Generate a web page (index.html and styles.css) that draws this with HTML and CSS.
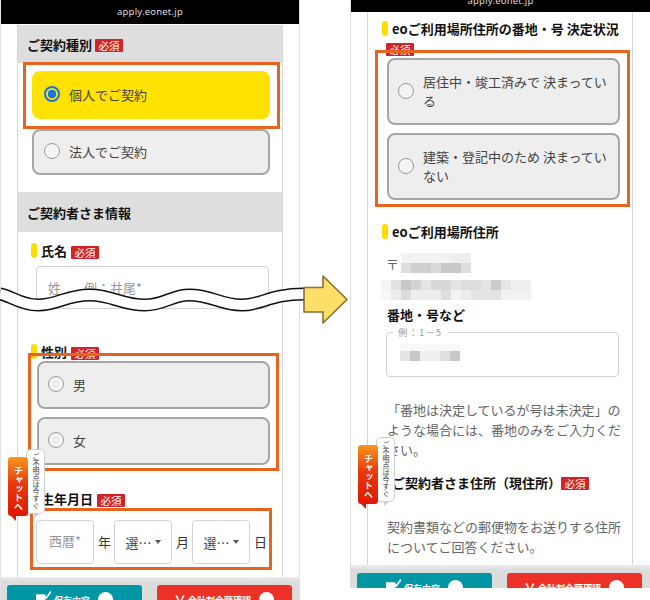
FILE: index.html
```html
<!DOCTYPE html>
<html lang="ja">
<head>
<meta charset="utf-8">
<title>eo お申し込みフォーム</title>
<link rel="stylesheet" href="styles.css">
</head>
<body>
<div class="stage">

  <section class="phone phone-left">
    <div class="topbar">apply.eonet.jp</div>
    <div class="card">
      <div class="sec-head">ご契約種別<span class="badge">必須</span></div>
      <div class="opt opt-on opt-first"><span class="radio radio-on"></span>個人でご契約</div>
      <div class="opt opt-second"><span class="radio"></span>法人でご契約</div>

      <div class="sec-head sec-head-tall">ご契約者さま情報</div>
      <div class="label label-name"><span class="mark"></span>氏名<span class="badge">必須</span></div>
      <div class="input input-name"><span>姓</span><span class="ph-name">例：井尾*</span></div>

      <div class="label label-sex"><span class="mark"></span>性別<span class="badge">必須</span></div>
      <div class="opt opt-sex opt-sex-first"><span class="radio"></span>男</div>
      <div class="opt opt-sex"><span class="radio"></span>女</div>

      <div class="label label-birth"><span class="mark"></span>生年月日<span class="badge">必須</span></div>
      <div class="date-row">
        <div class="date-box date-ph">西暦*</div><span class="date-unit">年</span>
        <div class="date-box">選⋯<i class="caret"></i></div><span class="date-unit">月</span>
        <div class="date-box">選⋯<i class="caret"></i></div><span class="date-unit">日</span>
      </div>
    </div>
    <div class="bottom">
      <div class="btn btn-teal"><svg class="btn-icon" viewBox="0 0 16 16"><rect x="0" y="3" width="10" height="13" fill="#fff"/><path d="M8 4l3 3 5-7" fill="none" stroke="#fff" stroke-width="1.8"/></svg><span class="btn-text">保存内容</span><span class="btn-dot"></span></div>
      <div class="btn btn-red"><span class="btn-yen">¥</span><span class="btn-text">合計割金額確認</span><span class="btn-dot"></span></div>
    </div>

    <div class="frame frame-a"></div>
    <div class="frame frame-b"></div>
    <div class="frame frame-c"></div>

    <div class="chat">
      <div class="chat-bubble">ご不明点は今すぐ</div>
      <div class="chat-tab">チャットへ</div>
    </div>
  </section>

  <section class="phone phone-right">
    <div class="topbar topbar-cut"><span>apply.eonet.jp</span></div>
    <div class="card">
      <div class="label label-r1"><span class="mark"></span>eoご利用場所住所の番地・号 決定状況</div>
      <span class="badge badge-own">必須</span>
      <div class="opt opt-wide opt-wide-first"><span class="radio"></span><span class="opt-text">居住中・竣工済みで 決まっている</span></div>
      <div class="opt opt-wide"><span class="radio"></span><span class="opt-text">建築・登記中のため 決まっていない</span></div>

      <div class="label label-r2"><span class="mark"></span>eoご利用場所住所</div>
      <div class="zip">〒<svg class="mosaic" width="70" height="20" shape-rendering="crispEdges">
        <rect width="50" height="10" fill="#f3f3f3"/><rect x="50" width="20" height="10" fill="#eeeeee"/>
        <rect y="10" width="10" height="10" fill="#dedede"/><rect x="10" y="10" width="20" height="10" fill="#cfcfcf"/><rect x="30" y="10" width="10" height="10" fill="#dadada"/><rect x="40" y="10" width="20" height="10" fill="#c8c8c8"/><rect x="60" y="10" width="10" height="10" fill="#dedede"/>
      </svg></div>
      <svg class="mosaic mosaic-addr" width="150" height="20" shape-rendering="crispEdges">
        <rect width="10" height="10" fill="#f5f5f5"/><rect x="10" width="10" height="10" fill="#e2e2e2"/><rect x="20" width="10" height="10" fill="#c8c8c8"/><rect x="30" width="10" height="10" fill="#d4d4d4"/><rect x="40" width="10" height="10" fill="#e4e4e4"/><rect x="50" width="20" height="10" fill="#d8d8d8"/><rect x="70" width="10" height="10" fill="#e4e4e4"/><rect x="80" width="20" height="10" fill="#dedede"/><rect x="100" width="10" height="10" fill="#e6e6e6"/><rect x="110" width="10" height="10" fill="#cccccc"/><rect x="120" width="10" height="10" fill="#e6e6e6"/><rect x="130" width="20" height="10" fill="#efefef"/>
        <rect y="10" width="10" height="10" fill="#f7f7f7"/><rect x="10" y="10" width="10" height="10" fill="#ececec"/><rect x="20" y="10" width="10" height="10" fill="#dcdcdc"/><rect x="30" y="10" width="30" height="10" fill="#eeeeee"/><rect x="60" y="10" width="10" height="10" fill="#dedede"/><rect x="70" y="10" width="10" height="10" fill="#f2f2f2"/><rect x="80" y="10" width="10" height="10" fill="#ececec"/><rect x="90" y="10" width="30" height="10" fill="#e4e4e4"/><rect x="120" y="10" width="30" height="10" fill="#f2f2f2"/>
      </svg>
      <div class="sub-label">番地・号など</div>
      <div class="input input-addr">
        <span class="legend">例：1－5</span>
        <svg class="mosaic" width="60" height="17" shape-rendering="crispEdges">
          <rect width="60" height="7" fill="#f8f8f8"/>
          <rect y="7" width="10" height="10" fill="#e4e4e4"/><rect x="10" y="7" width="10" height="10" fill="#c6c6c6"/><rect x="20" y="7" width="20" height="10" fill="#efefef"/><rect x="40" y="7" width="10" height="10" fill="#e0e0e0"/><rect x="50" y="7" width="10" height="10" fill="#c8c8c8"/>
        </svg>
      </div>
      <p class="para para-a">「番地は決定しているが号は未決定」のような場合には、番地のみをご入力ください。</p>
      <div class="label label-r3"><span class="mark"></span>ご契約者さま住所（現住所）<span class="badge">必須</span></div>
      <p class="para para-b">契約書類などの郵便物をお送りする住所についてご回答ください。</p>
    </div>
    <div class="bottom">
      <div class="btn btn-teal"><svg class="btn-icon" viewBox="0 0 16 16"><rect x="0" y="3" width="10" height="13" fill="#fff"/><path d="M8 4l3 3 5-7" fill="none" stroke="#fff" stroke-width="1.8"/></svg><span class="btn-text">保存内容</span><span class="btn-dot"></span></div>
      <div class="btn btn-red"><span class="btn-yen">¥</span><span class="btn-text">合計割金額確認</span><span class="btn-dot"></span></div>
    </div>

    <div class="frame frame-d"></div>

    <div class="chat">
      <div class="chat-bubble">ご不明点は今すぐ</div>
      <div class="chat-tab">チャットへ</div>
    </div>
  </section>

  <svg class="wave" viewBox="0 0 304 40" aria-hidden="true">
    <path class="wave-edge" d="M0 15 C12 17 20 26 38 26 C58 26 66 16 90 16 C112 16 122 26 145 26 C164 26 172 16 189 16 C212 16 220 26 242 26 C262 26 270 15 304 15"/>
    <path class="wave-fill" d="M0 15 C12 17 20 26 38 26 C58 26 66 16 90 16 C112 16 122 26 145 26 C164 26 172 16 189 16 C212 16 220 26 242 26 C262 26 270 15 304 15"/>
  </svg>

  <svg class="arrow" viewBox="0 0 46 50" aria-hidden="true">
    <path d="M1 12.5H20V1L44 24.500 20 48V37H1Z" fill="#fbdf66" stroke="#8f6b3e" stroke-width="1.6" stroke-linejoin="round"/>
  </svg>
</div>
</body>
</html>
```

FILE: styles.css
```css
* { box-sizing: border-box; }

html, body {
  margin: 0;
  padding: 0;
  background: #fff;
}

body {
  font-family: "Noto Sans CJK JP", "Noto Sans", sans-serif;
  font-size: 13px;
  color: #333;
}

.stage {
  position: relative;
  display: flex;
  gap: 50px;
  width: 650px;
  height: 600px;
  overflow: hidden;
}

.phone {
  position: relative;
  display: flex;
  flex-direction: column;
  flex: none;
  overflow: hidden;
  border-left: 1px solid #e2e2e2;
  border-right: 1px solid #e2e2e2;
}

.phone-left { width: 300px; height: 600px; }
.phone-right { width: 301px; height: 588px; }

.topbar {
  flex: none;
  height: 24px;
  background: #000;
  color: #ddd;
  font-family: "Noto Sans", sans-serif;
  font-size: 9.5px;
  line-height: 24px;
  letter-spacing: 0.2px;
  text-align: center;
}

.phone-left .topbar { margin-bottom: 1px; }

.topbar-cut {
  height: 12px;
  overflow: hidden;
}

.topbar-cut span {
  display: block;
  margin-top: -11px;
}

.card {
  flex: 1 1 0;
  min-height: 0;
  width: 266px;
  margin-left: 16px;
  overflow: hidden;
  background: #fff;
  border-left: 1px solid #d8d8d8;
  border-right: 1px solid #d8d8d8;
}

.sec-head {
  display: flex;
  align-items: center;
  gap: 3px;
  height: 38px;
  padding-left: 9px;
  background: #dedede;
  color: #111;
  font-weight: 700;
}

.sec-head .badge { margin-top: 2px; }

.sec-head-tall {
  height: 40px;
  margin-top: 17px;
}

.badge {
  display: inline-block;
  flex: none;
  width: 28px;
  height: 13px;
  background: #d2222a;
  border-radius: 1px;
  color: #fff;
  font-size: 10.5px;
  font-weight: 400;
  line-height: 13px;
  text-align: center;
}

.opt {
  display: flex;
  align-items: center;
  gap: 9px;
  background: #eee;
  border: 2px solid #a6a6a6;
  border-radius: 8px;
  padding: 0 0 2px 10px;
  color: #444;
  font-size: 13px;
}

.opt-first {
  height: 48px;
  margin: 8px 12px 0 14px;
}

.opt-second {
  height: 46px;
  margin: 10px 12px 0 14px;
}

.opt-on {
  background: #ffe200;
  border-color: #ffe200;
}

.opt-sex {
  height: 48px;
  margin: 8px 12px 0 19px;
  padding-left: 9px;
}

.opt-sex-first { margin-top: 2px; }

.opt-wide {
  height: 67px;
  width: 233px;
  margin: 8px 0 0 19px;
  padding-left: 9px;
  line-height: 19px;
}

.opt-wide-first { margin-top: 2px; }

.opt-text { width: 186px; }

.radio {
  flex: none;
  width: 16px;
  height: 16px;
  border: 1.5px solid #9c9c9c;
  border-radius: 50%;
  background: #f4f4f4;
}

.radio-on {
  border: 2px solid #1a73e8;
  background: radial-gradient(circle, #1a73e8 0 4px, #ffe200 4.5px);
}

.label {
  display: flex;
  align-items: center;
  gap: 4px;
  height: 16px;
  margin-left: 13px;
  color: #111;
  font-weight: 700;
  white-space: nowrap;
}

.label .badge { margin-top: 4px; }

.mark {
  flex: none;
  width: 6px;
  height: 15px;
  border-radius: 3px;
  background: #ffdc00;
}

.label-name { margin-top: 10px; }
.label-sex { margin-top: 34px; }
.label-birth { margin-top: 25px; }
.label-r1 { margin: 8px 0 0 14px; }
.label-r2 { margin: 23px 0 0 14px; }
.label-r3 { margin: 14px 0 0 14px; }
.label-r3 .badge { margin: 2px 0 0 -4px; }

.badge-own {
  display: block;
  margin: 7px 0 0 18px;
}

.input {
  background: #fff;
  border: 1px solid #d4d4d4;
  border-radius: 4px;
}

.input-name {
  display: flex;
  gap: 23px;
  width: 233px;
  height: 43px;
  margin: 8px 0 0 18px;
  padding: 11px 0 0 11px;
  color: #999;
}

.input-addr {
  position: relative;
  width: 233px;
  height: 45px;
  margin: 9px 0 0 18px;
  padding: 11px 0 0 13px;
}

.legend {
  position: absolute;
  left: 6px;
  top: -8px;
  padding: 0 6px 0 5px;
  background: #fff;
  color: #999;
  font-size: 9.5px;
  line-height: 14px;
  letter-spacing: 1px;
}

.date-row {
  display: flex;
  gap: 4px;
  height: 44px;
  margin: 14px 0 0 18px;
}

.date-box {
  display: flex;
  align-items: center;
  justify-content: center;
  gap: 3px;
  flex: none;
  width: 58px;
  border: 1px solid #d4d4d4;
  border-radius: 4px;
  color: #444;
}

.date-ph { color: #999; padding-bottom: 3px; }

.date-unit {
  flex: none;
  width: 12px;
  font-size: 13px;
  line-height: 44px;
  text-align: center;
  color: #333;
}

.caret {
  width: 0;
  height: 0;
  border-left: 3.5px solid transparent;
  border-right: 3.5px solid transparent;
  border-top: 4px solid #555;
}

.bottom {
  flex: none;
  display: flex;
  gap: 15px;
  height: 23px;
  padding: 8px 0 0 6px;
  background: linear-gradient(#ececec, #dcdcdc 5px);
  overflow: hidden;
}

.btn {
  flex: none;
  display: flex;
  align-items: flex-start;
  justify-content: center;
  gap: 3px;
  width: 135px;
  height: 34px;
  padding-top: 5px;
  border-radius: 3px;
  color: #fff;
  font-size: 9px;
  font-weight: 700;
}

.btn-teal { background: #0096a4; }
.btn-red { background: #ec3226; }

.btn-icon {
  flex: none;
  width: 15px;
  height: 16px;
  margin-top: 1px;
}

.btn-text {
  margin-top: 5px;
  line-height: 12px;
  white-space: nowrap;
}

.btn-yen {
  font-size: 18px;
  font-weight: 400;
  line-height: 20px;
}

.btn-dot {
  flex: none;
  width: 15px;
  height: 15px;
  margin: 2px 0 0 5px;
  border-radius: 50%;
  background: #fff;
}

.frame {
  position: absolute;
  border: 3px solid #e8641e;
  pointer-events: none;
}

.frame-a { left: 22px; top: 62px; width: 257px; height: 67px; }
.frame-b { left: 27px; top: 353px; width: 251px; height: 118px; }
.frame-c { left: 29px; top: 508px; width: 242px; height: 62px; }
.frame-d { left: 24px; top: 50px; width: 255px; height: 157px; }

.chat {
  position: absolute;
  left: 7px;
  width: 38px;
  height: 72px;
}

.phone-left .chat { top: 449px; }
.phone-right .chat { top: 437px; }

.chat-tab {
  position: absolute;
  left: 0;
  top: 8px;
  width: 20px;
  height: 59px;
  padding-top: 9px;
  border-radius: 3px;
  background: linear-gradient(#f8961f, #e83a0a 45%, #df1800);
  color: #fff;
  font-size: 9px;
  font-weight: 700;
  line-height: 20px;
  writing-mode: vertical-rl;
  white-space: nowrap;
}

.chat-tab::after {
  content: "";
  position: absolute;
  left: 3px;
  top: 59px;
  border-top: 5px solid #df1800;
  border-left: 5px solid transparent;
}

.chat-bubble {
  position: absolute;
  left: 18px;
  top: 0;
  width: 19px;
  height: 65px;
  padding-top: 3px;
  background: #fff;
  border: 1px solid #cfcfcf;
  border-radius: 5px;
  color: #333;
  font-size: 7px;
  line-height: 17px;
  writing-mode: vertical-rl;
  white-space: nowrap;
}

.chat-bubble::after {
  content: "";
  position: absolute;
  left: 7px;
  top: 63px;
  border-top: 5px solid #cfcfcf;
  border-right: 6px solid transparent;
}

.zip {
  display: flex;
  align-items: center;
  gap: 2px;
  height: 20px;
  margin: 14px 0 0 18px;
  color: #666;
}

.mosaic { display: block; flex: none; }

.mosaic-addr { margin: 7px 0 0 13px; }

.sub-label {
  height: 16px;
  margin: 7px 0 0 19px;
  color: #111;
  font-weight: 700;
  line-height: 16px;
}

.para {
  width: 234px;
  margin: 0 0 0 19px;
  color: #666;
  font-size: 13px;
  line-height: 20px;
}

.para-a { margin-top: 23px; }
.para-b { margin-top: 27px; }

.wave {
  position: absolute;
  left: 0;
  top: 279px;
  width: 304px;
  height: 40px;
}

.wave path { fill: none; }
.wave-edge { stroke: #111; stroke-width: 13; }
.wave-fill { stroke: #fff; stroke-width: 10; }

.arrow {
  position: absolute;
  left: 303px;
  top: 275px;
  width: 46px;
  height: 50px;
}
```
